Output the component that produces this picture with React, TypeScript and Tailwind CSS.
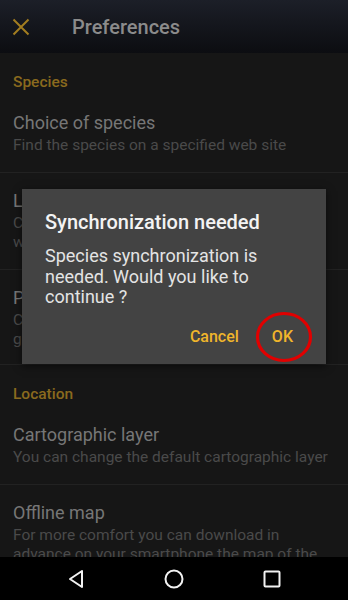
import { memo } from "react";

type Pref = { title: string; lines: string[]; last?: boolean; tight?: boolean };

const Category = ({ label }: { label: string }) => (
  <div className="h-[42px] pt-[19px] px-[13px]">
    <p className="text-[15.5px] leading-[20px] font-medium text-[#8a6a1e]">{label}</p>
  </div>
);

const Item = ({ title, lines, last, tight }: Pref) => (
  <div className={`pt-[17px] px-[13px] ${tight ? "pb-[15px]" : "pb-[17px]"} ${last ? "" : "border-b border-[#222222]"}`}>
    <p className="text-[18px] leading-[22px] text-[#767676]">{title}</p>
    <p className="mt-[2px] text-[15.5px] leading-[19px] text-[#4a4a4a]">
      {lines.map((l) => (
        <span key={l} className="block">{l}</span>
      ))}
    </p>
  </div>
);

const App = () => {
  return (
    <div className="relative w-[348px] h-[600px] flex flex-col bg-[#161616] overflow-hidden font-['Roboto','Liberation_Sans',sans-serif]">
      {/* toolbar */}
      <div className="h-[53px] shrink-0 flex items-center bg-gradient-to-b from-[#1c1f28] to-[#0c0d11]">
        <svg width="18" height="18" viewBox="0 0 18 18" className="ml-[12px]">
          <path d="M1.5 1.5 L16.5 16.5 M16.5 1.5 L1.5 16.5" stroke="#a27d20" strokeWidth="2" />
        </svg>
        <span className="ml-[42px] text-[20px] font-medium text-[#8b8b8b]">Preferences</span>
      </div>

      {/* preference list */}
      <div className="flex-1 overflow-hidden">
        <Category label="Species" />
        <Item title="Choice of species" lines={["Find the species on a specified web site"]} />
        <Item title="Local species list" lines={["Choose the list of species on the", "web site of your region"]} />
        <Item tight title="Photos of species" lines={["Choose to display photos in the", "gallery of each species"]} />
        <Category label="Location" />
        <Item title="Cartographic layer" lines={["You can change the default cartographic layer"]} />
        <Item
          last
          title="Offline map"
          lines={["For more comfort you can download in", "advance on your smartphone the map of the", "area you will visit"]}
        />
      </div>

      {/* nav bar */}
      <div className="h-[43px] shrink-0 bg-black flex items-center justify-center gap-[78px]">
        <svg width="20" height="20" viewBox="0 0 20 20">
          <path d="M16 2 L4 10 L16 18 Z" fill="none" stroke="#f2f2f2" strokeWidth="2" strokeLinejoin="round" />
        </svg>
        <svg width="20" height="20" viewBox="0 0 20 20">
          <circle cx="10" cy="10" r="8.5" fill="none" stroke="#f2f2f2" strokeWidth="2" />
        </svg>
        <svg width="20" height="20" viewBox="0 0 20 20">
          <rect x="2.5" y="2.5" width="15" height="15" rx="1" fill="none" stroke="#f2f2f2" strokeWidth="2" />
        </svg>
      </div>

      {/* dialog */}
      <div className="absolute left-[22px] top-[189px] w-[304px] h-[175px] bg-[#434343] shadow-[0_2px_8px_rgba(0,0,0,0.6)] flex flex-col pt-[21px]">
        <p className="px-[23px] text-[20px] leading-[24px] font-medium text-[#f3f3f3]">Synchronization needed</p>
        <p className="mt-[12px] pl-[23px] pr-[24px] text-[18px] leading-[20.5px] text-[#e4e4e4]">
          Species synchronization is needed. Would you like to continue ?
        </p>
        <div className="mt-auto mb-[9px] h-[36px] flex justify-end items-center gap-[33px] pr-[33px]">
          <button className="text-[16px] font-medium text-[#f0b52b]">Cancel</button>
          <button className="text-[16px] font-medium text-[#f0b52b]">OK</button>
        </div>
        <svg
          width="60"
          height="54"
          viewBox="0 0 60 54"
          className="absolute left-[232px] top-[121px] pointer-events-none"
        >
          <ellipse cx="30" cy="27" rx="26.5" ry="23.5" fill="none" stroke="#e10000" strokeWidth="3.2" />
        </svg>
      </div>
    </div>
  );
};

export default memo(App);
